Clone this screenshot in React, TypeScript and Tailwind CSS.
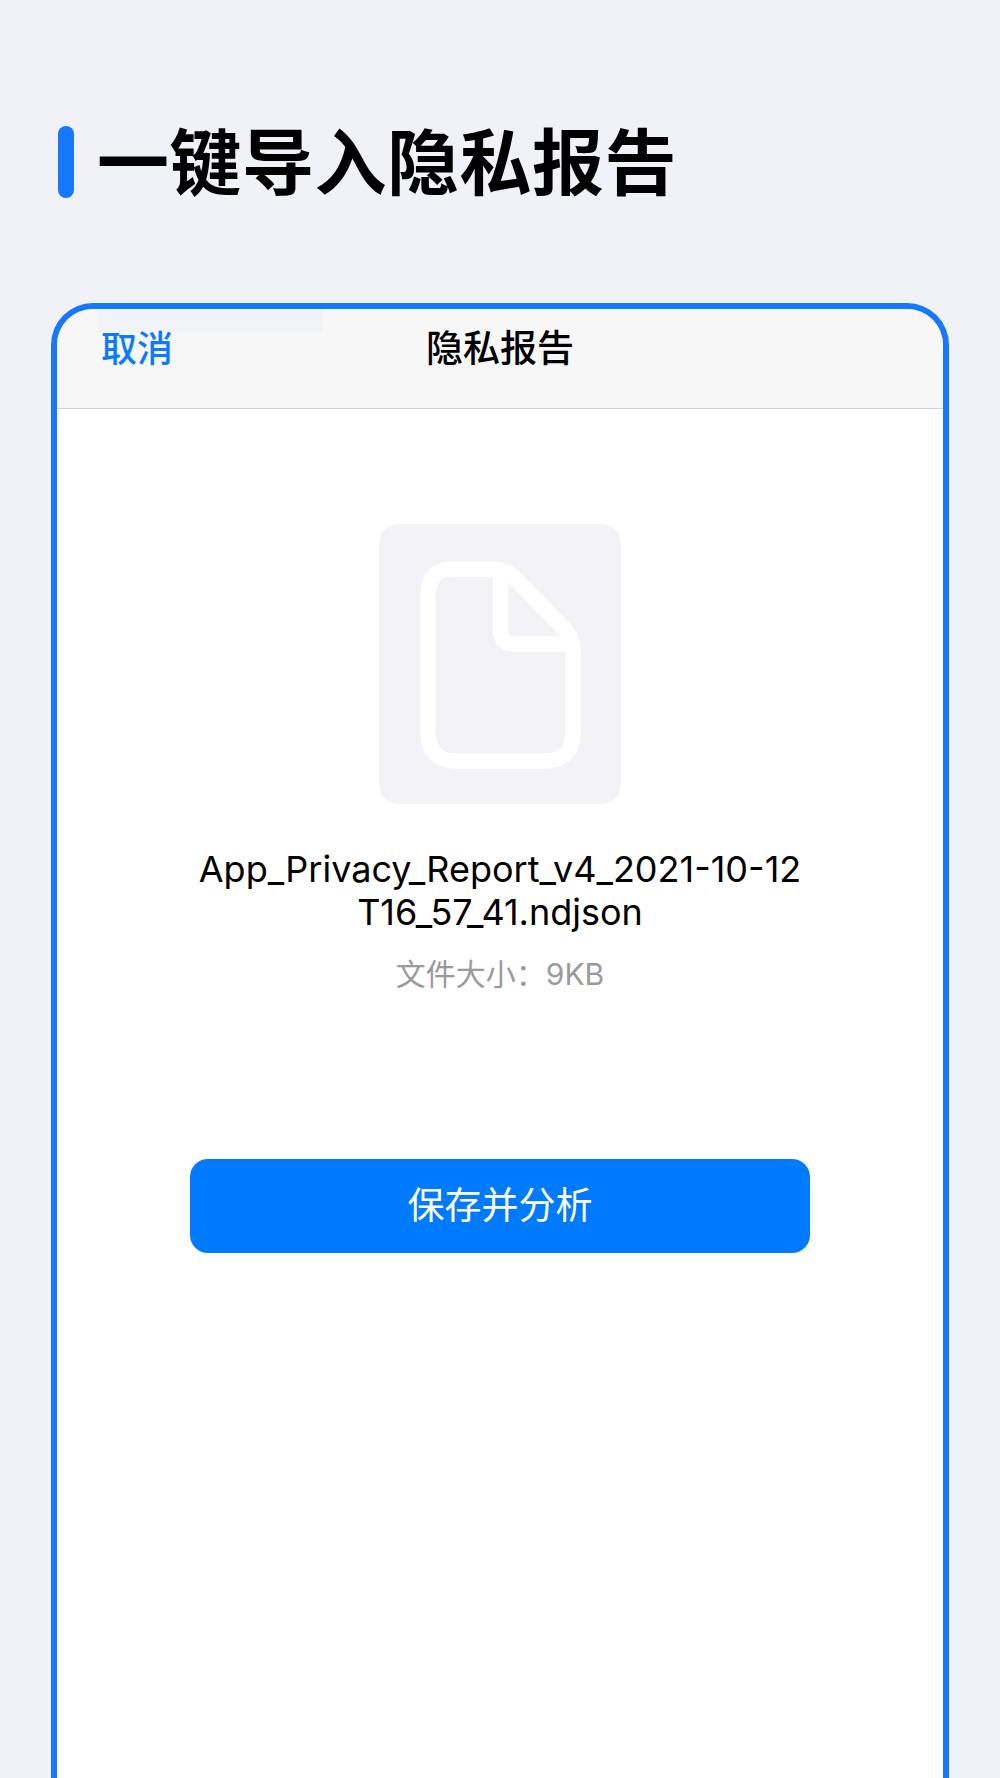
import React from "react";

const FONT = "font-['Inter','Liberation_Sans','Noto_Sans_CJK_SC',sans-serif]";

const DocIcon = () => (
  <svg width="242" height="280" viewBox="0 0 242 280" fill="none" stroke="#ffffff" strokeWidth="15.5">
    <path d="M73 45H110C122 45 129 47 135 53L187 107C192 112 194 118 194 128V208C194 228 184 237 165 237H78C59 237 49 228 49 208V72C49 54 57 45 73 45Z" />
    <path d="M121.5 45V106C121.5 116 127 120 136 120H194" />
  </svg>
);

const App: React.FC = () => {
  return (
    <div className={`h-[1778px] w-[1000px] overflow-hidden bg-[#f1f2f8] ${FONT}`}>
      <div className="flex h-[303px] items-start pl-[58px] pt-[126px]">
        <div className="h-[72px] w-4 rounded-lg bg-[#1677ff]" />
        <h1 className="ml-[23px] mt-px text-[72px] font-bold leading-[72px] tracking-[0.5px] text-black">一键导入隐私报告</h1>
      </div>

      <div className="relative mx-[51px] h-[1475px] overflow-hidden rounded-t-[42px] border-[6px] border-b-0 border-[#1677ff] bg-white">
        <div className="relative flex h-[100px] items-start justify-center border-b border-[#cfcfcf] bg-[#f7f7f7] pt-[18px]">
          <div className="absolute left-[40px] top-0 h-[23px] w-[225px] bg-[#f2f3f8]" />
          <span className="absolute left-[44px] top-[18px] text-[36px] font-medium leading-[44px] text-[#0a7aff]">取消</span>
          <span className="text-[37px] font-medium leading-[44px] text-black">隐私报告</span>
        </div>

        <div className="flex flex-col items-center">
          <div className="mt-[115px] h-[280px] w-[242px] rounded-[20px] bg-[#f2f2f7]">
            <DocIcon />
          </div>
          <div className="mt-[44px] w-[620px] text-center text-[36px] leading-[43px] text-black">
            <div>App_Privacy_Report_v4_2021-10-12</div>
            <div>T16_57_41.ndjson</div>
          </div>
          <div className="mt-5 text-[30px] leading-[40px] text-[#9a9a9e]">文件大小：9KB</div>
          <button className="mt-[165px] flex h-[94px] w-[620px] items-center justify-center rounded-[18px] bg-[#007aff] text-[37px] text-white">
            保存并分析
          </button>
        </div>
      </div>
    </div>
  );
};

export default App;
